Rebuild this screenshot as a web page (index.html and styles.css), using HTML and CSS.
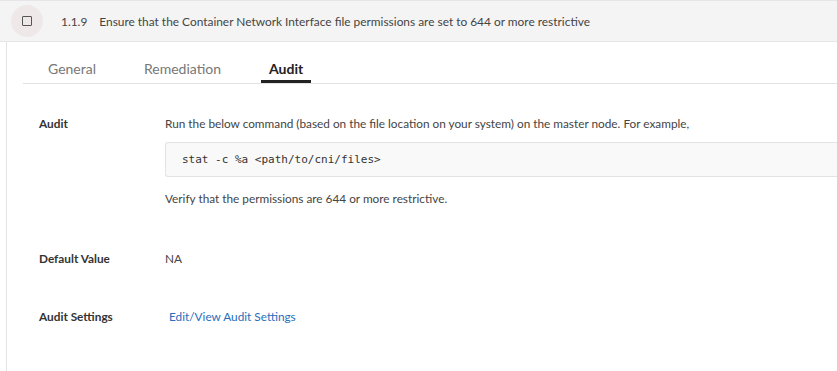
FILE: index.html
```html
<!DOCTYPE html>
<html>
<head>
<meta charset="utf-8">
<link rel="stylesheet" href="styles.css">
</head>
<body>
<div class="page">
  <div class="header">
    <div class="check-wrap"><span class="checkbox"></span></div>
    <span class="num">1.1.9</span>
    <span class="title">Ensure that the Container Network Interface file permissions are set to 644 or more restrictive</span>
  </div>
  <div class="content">
    <div class="tabs">
      <div class="tab">General</div>
      <div class="tab">Remediation</div>
      <div class="tab active">Audit</div>
    </div>
    <div class="rows">
      <div class="row row-audit">
        <div class="label">Audit</div>
        <div class="value">
          <p class="text">Run the below command (based on the file location on your system) on the master node. For example,</p>
          <pre class="code">stat -c %a &lt;path/to/cni/files&gt;</pre>
          <p class="text">Verify that the permissions are 644 or more restrictive.</p>
        </div>
      </div>
      <div class="row row-default">
        <div class="label">Default Value</div>
        <div class="value text">NA</div>
      </div>
      <div class="row row-settings">
        <div class="label">Audit Settings</div>
        <div class="value"><a class="link" href="#">Edit/View Audit Settings</a></div>
      </div>
    </div>
  </div>
</div>
</body>
</html>
```
FILE: styles.css
```css
* { box-sizing: border-box; }
html, body { margin: 0; padding: 0; background: #fff; }
body { font-family: Lato, "Open Sans", sans-serif; color: #333; overflow: hidden; }
.page { width: 837px; height: 371px; }
.header {
  height: 42px;
  background: #f4f4f4;
  border-top: 1px solid #e6e6e6;
  border-bottom: 1px solid #e6e6e6;
  display: flex;
  align-items: center;
  font-size: 11.9px;
  color: #444;
}
.check-wrap {
  width: 32px; height: 32px;
  border-radius: 50%;
  background: #efe8e8;
  margin-left: 11px;
  display: flex; align-items: center; justify-content: center;
}
.checkbox {
  width: 10px; height: 10px;
  border: 1.5px solid #555;
  border-radius: 1px;
}
.num { margin-left: 18px; }
.title { margin-left: 12px; }
.content {
  margin-left: 6px;
  border-left: 1px solid #e3e3e3;
  height: 329px;
}
.tabs {
  margin-left: 16px;
  display: flex;
  gap: 32px;
  padding-left: 17px;
  border-bottom: 1px solid #e3e3e3;
  height: 42px;
  padding-top: 18px;
}
.tab {
  font-size: 14px;
  color: #777;
  padding: 0 8px;
  height: 23px;
  line-height: 18px;
}
.tab.active {
  color: #222;
  font-weight: 700;
  border-bottom: 3px solid #222;
}
.rows { padding-left: 32px; }
.row { display: grid; grid-template-columns: 126px 1fr; font-size: 11.8px; line-height: 15px; }
.label { font-weight: 700; color: #333; }
.text { color: #444; margin: 0; }
.row-audit { margin-top: 32px; }
.code {
  margin: 11px 0 14px 0;
  background: #f9f9f9;
  border: 1px solid #e3e3e3;
  border-right: none;
  border-radius: 3px 0 0 3px;
  height: 35px;
  padding: 0 16px;
  font-family: "DejaVu Sans Mono", monospace;
  font-size: 11px;
  line-height: 33px;
  color: #333;
}
.row-default { margin-top: 45px; }
.row-settings { margin-top: 43px; }
.link { color: #2a6ebb; text-decoration: none; margin-left: 4px; }
```
